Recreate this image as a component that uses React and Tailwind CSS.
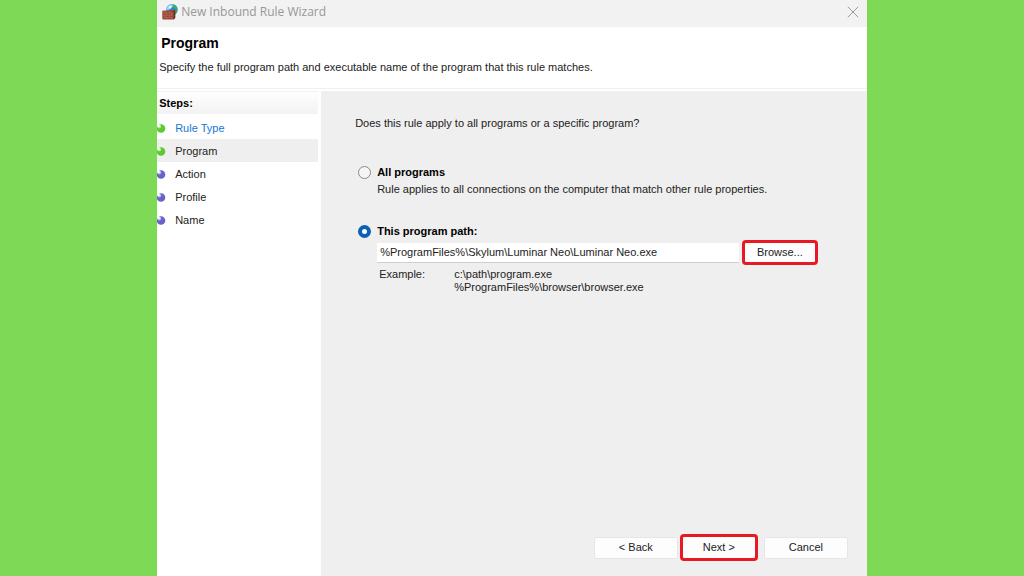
import React from "react";

const steps = [
  { name: "Rule Type", done: true, link: true },
  { name: "Program", done: true, current: true },
  { name: "Action" },
  { name: "Profile" },
  { name: "Name" },
];

function Bullet({ done }) {
  return (
    <svg className="h-[9px] w-[9px] shrink-0" viewBox="0 0 9 9" aria-hidden="true">
      <circle cx="4" cy="4.500" r="4.300" fill={done ? "#5cc832" : "#6a62cc"} />
      <circle cx="2.200" cy="2.400" r="2" fill={done ? "#b4e79c" : "#bdbcec"} />
      <circle cx="1.600" cy="1.800" r="1.500" fill="#fff" opacity=".85" />
    </svg>
  );
}

function FirewallIcon() {
  return (
    <svg className="h-4 w-4 shrink-0" viewBox="0 0 16 16" aria-hidden="true">
      <circle cx="10" cy="5.800" r="5.700" fill="#2b86cf" />
      <path d="M4.600 4.500C5.500 1.500 8.500 0 11.200 .3L11 2.500L9 4.500L6.500 6L4.500 6.500Z" fill="#8fd2f2" />
      <path d="M10.500 .800L13.500 1.500L15.300 4L14 5L12.500 4L11 3Z" fill="#48ad4c" />
      <path d="M12.500 6L15.500 6.500L14.500 9L13 10.500L12 8Z" fill="#48ad4c" />
      <path d="M7 2L9.500 1.800L9 4L6.500 4.500Z" fill="#e6f6fc" />
      <path d="M.300 6.800L11.500 6L13.200 6.500V14L11.500 15.600H1L.300 14.800Z" fill="#9a4635" />
      <path d="M11.500 6L13.200 6.500V14L11.500 15.600Z" fill="#6b2c22" />
      <path d="M.300 9H11.500M.300 11.200H11.500M.300 13.400H11.500M3 6.800V9M7.500 6.500V9M5 9V11.200M9.500 9V11.200M3 11.200V13.400M7.500 11.200V13.400M5 13.400V15.600M9.500 13.400V15.600" stroke="#c48571" strokeWidth=".4" />
    </svg>
  );
}

function WizardButton({ children }) {
  return (
    <button
      type="button"
      className="h-[22px] w-[84px] rounded-[2px] border border-[#e6e6e6] bg-[#fdfdfd] leading-none text-[#222]"
    >
      {children}
    </button>
  );
}

export default function App() {
  return (
    <div className="flex min-h-screen bg-[#7ed957] px-[15.35%] font-['Liberation_Sans',Arial,sans-serif] text-[11px] leading-[13px] text-[#222]">
      <div className="flex flex-1 flex-col bg-white">
        <div className="flex h-[27px] items-center bg-[#f2f2f2] pr-2 pb-1 pl-[5px]">
          <FirewallIcon />
          <span className="ml-[3px] flex-1 font-['Open_Sans','Noto_Sans',sans-serif] text-[12px] leading-4 text-[#979797]">
            New Inbound Rule Wizard
          </span>
          <button type="button" aria-label="Close" className="h-3 w-3">
            <svg className="h-3 w-3" viewBox="0 0 12 12" fill="none" stroke="#999" strokeWidth="1">
              <path d="M.8 .8L11.200 11.200M11.200 .8L.8 11.200" />
            </svg>
          </button>
        </div>

        <header className="h-[62px] border-b border-[#f0f0f0] pt-2 pl-1">
          <h1 className="text-[14px] leading-4 font-bold text-black">Program</h1>
          <p className="-ml-0.5 pt-2.5">
            Specify the full program path and executable name of the program that this rule matches.
          </p>
        </header>

        <div className="flex flex-1 pt-0.5">
          <nav className="w-[161px] shrink-0" aria-labelledby="steps-title">
            <h2
              id="steps-title"
              className="h-[23px] border-t border-[#f2f2f2] bg-linear-to-b from-white to-[#f2f2f2] pt-[5px] pl-0.5 font-bold text-black"
            >
              Steps:
            </h2>
            <ol className="pt-0.5">
              {steps.map((step) => (
                <li
                  key={step.name}
                  className={`flex h-[23px] items-center gap-[9px] pt-px ${step.current ? "bg-[#efefef]" : ""}`}
                  aria-current={step.current ? "step" : undefined}
                >
                  <Bullet done={step.done} />
                  {step.link ? (
                    <a href="#rule-type" className="text-[#1277d3]">{step.name}</a>
                  ) : (
                    <span>{step.name}</span>
                  )}
                </li>
              ))}
            </ol>
          </nav>

          <main className="ml-[3px] flex flex-1 flex-col bg-[#efefef] pr-[19px] pb-[15px] pl-[34px]">
            <p className="pt-[26px]">Does this rule apply to all programs or a specific program?</p>

            <div className="mt-9 flex gap-1.5 pl-[3px]">
              <input
                id="all"
                type="radio"
                name="scope"
                className="h-[13px] w-[13px] appearance-none rounded-full border border-[#8a8a8a] bg-[#f5f5f5] checked:border-4 checked:border-[#0962b5] checked:bg-white"
              />
              <div>
                <label htmlFor="all" className="block font-bold text-black">All programs</label>
                <p className="pt-1">
                  Rule applies to all connections on the computer that match other rule properties.
                </p>
              </div>
            </div>

            <div className="mt-[29px] flex gap-1.5 pl-[3px]">
              <input
                id="path"
                type="radio"
                name="scope"
                defaultChecked
                className="h-[13px] w-[13px] appearance-none rounded-full border border-[#8a8a8a] bg-[#f5f5f5] checked:border-4 checked:border-[#0962b5] checked:bg-white"
              />
              <label htmlFor="path" className="font-bold text-black">This program path:</label>
            </div>

            <div className="mt-0.5 mr-[30px] flex items-center gap-[3px] pl-[22px]">
              <input
                type="text"
                aria-label="Program path"
                defaultValue="%ProgramFiles%\Skylum\Luminar Neo\Luminar Neo.exe"
                className="h-5 min-w-0 flex-1 border-b border-[#cfcfcf] bg-white px-[3px] outline-none"
              />
              <button
                type="button"
                className="h-[25px] w-[76px] rounded-[4px] border-3 border-[#e81923] bg-[#fdfdfd] leading-none"
              >
                Browse...
              </button>
            </div>

            <dl className="mt-[3px] flex pl-6">
              <dt className="w-[75px]">Example:</dt>
              <dd>
                c:\path\program.exe
                <br />
                %ProgramFiles%\browser\browser.exe
              </dd>
            </dl>

            <div className="mt-auto flex items-center justify-end">
              <WizardButton>&lt; Back</WizardButton>
              <button
                type="button"
                className="mr-1.5 ml-0.5 h-[27px] w-[78px] rounded-[4px] border-3 border-[#e81923] bg-[#fdfdfd] leading-none"
              >
                Next &gt;
              </button>
              <WizardButton>Cancel</WizardButton>
            </div>
          </main>
        </div>
      </div>
    </div>
  );
}
